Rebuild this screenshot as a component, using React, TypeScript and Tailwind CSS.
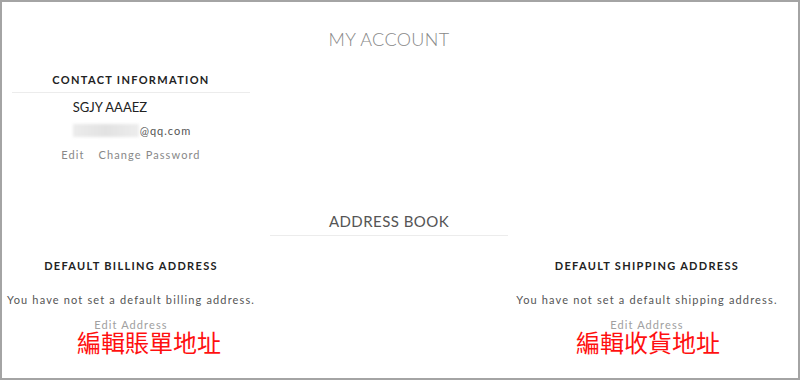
const lato = { fontFamily: "Lato, 'Open Sans', sans-serif" };

function AddressCard({
  title,
  note,
  label,
  shift,
}: {
  title: string;
  note: string;
  label: string;
  shift: string;
}) {
  return (
    <div className="flex w-[238px] flex-col items-center">
      <h3 className="mt-[24px] whitespace-nowrap text-[11px] font-bold leading-none tracking-[0.12em] text-[#222]">
        {title}
      </h3>
      <p className="mt-[23px] whitespace-nowrap text-[11px] leading-none tracking-[0.105em] text-[#555]">
        {note}
      </p>
      <a className="mt-[14px] whitespace-nowrap text-[11px] leading-none tracking-[0.1em] text-[#a0a0a0]">
        Edit Address
      </a>
      <div
        className={`whitespace-nowrap text-[24px] leading-none text-[#ff1010] ${shift}`}
        style={{ fontFamily: "'Noto Sans CJK TC', 'Noto Sans CJK SC', sans-serif" }}
      >
        {label}
      </div>
    </div>
  );
}

export default function App() {
  return (
    <div className="h-[380px] w-[800px] overflow-hidden border-2 border-[#a4a4a4] bg-white" style={lato}>
      <div className="w-[774px] px-[10px]">
        <h1 className="pt-[28px] text-center text-[18px] font-light leading-none tracking-[0.02em] text-[#888]">
          MY ACCOUNT
        </h1>

        <div className="mt-[26px] w-[238px]">
          <h3 className="border-b border-[#ececec] pb-[7px] text-center text-[11px] font-bold leading-none tracking-[0.12em] text-[#222]">
            CONTACT INFORMATION
          </h3>
          <div className="flex flex-col items-center">
            <div className="ml-[2px] flex flex-col">
              <div className="mt-[8px] text-[13px] leading-none text-[#222]">SGJY AAAEZ</div>
              <div className="mt-[10px] flex items-center text-[11px] leading-none tracking-[0.09em] text-[#555]">
                <span className="mr-[1px] inline-block h-[13px] w-[66px] bg-gradient-to-r from-[#ececec] via-[#e2e2e2] to-[#ededed] blur-[1.5px]" />
                @qq.com
              </div>
            </div>
            <div className="mt-[12px] flex gap-[14px] text-[11px] leading-none tracking-[0.1em] text-[#888]">
              <a>Edit</a>
              <a>Change Password</a>
            </div>
          </div>
        </div>

        <div className="mx-auto mt-[54px] w-[238px] border-b border-[#ececec] pb-[6px] text-center text-[15px] leading-none tracking-[0.03em] text-[#555]">
          ADDRESS BOOK
        </div>

        <div className="flex justify-between">
          <AddressCard
            title="DEFAULT BILLING ADDRESS"
            note="You have not set a default billing address."
            label="編輯賬單地址"
            shift="ml-[36px]"
          />
          <AddressCard
            title="DEFAULT SHIPPING ADDRESS"
            note="You have not set a default shipping address."
            label="編輯收貨地址"
            shift="ml-[2px]"
          />
        </div>
      </div>
    </div>
  );
}
